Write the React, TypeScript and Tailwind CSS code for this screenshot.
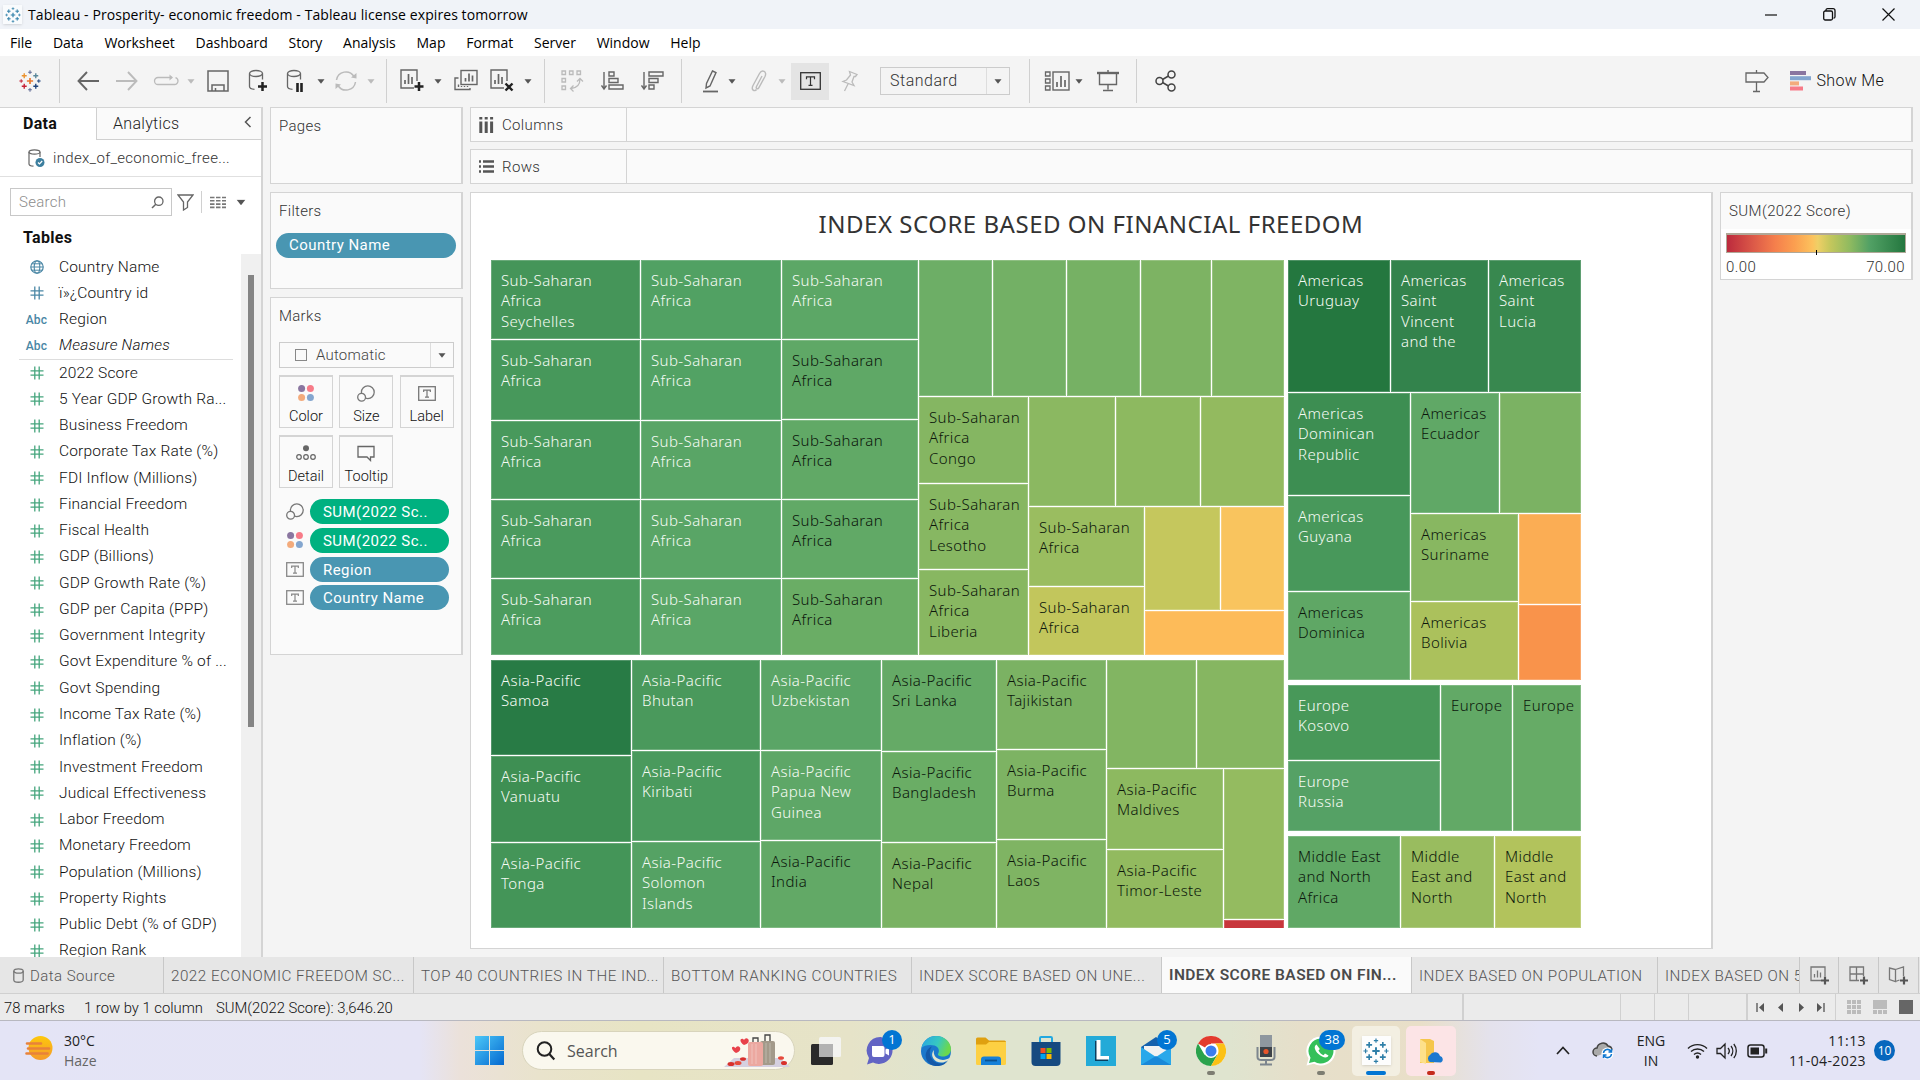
import React from "react";

/* ---------- treemap model ---------- */
type Leaf = { s: number; f: string; t?: string[]; dark?: boolean };
type Group = { s: number; dir: "row" | "col"; gap?: boolean; c: TreeNode[] };
type TreeNode = Leaf | Group;

const L = (s: number, f: string, t?: string, dark = false): Leaf => ({ s, f, t: t ? t.split("|") : undefined, dark });
const R = (s: number, ...c: TreeNode[]): Group => ({ s, dir: "row", c });
const C = (s: number, ...c: TreeNode[]): Group => ({ s, dir: "col", c });
const SSA = "Sub-Saharan|Africa";

const subSaharan = R(
  396,
  C(150, L(80, "#459559", SSA + "|Seychelles"), L(81, "#47985b", SSA), L(79, "#48995c", SSA), L(79, "#4a9a5d", SSA), L(77, "#4c9c5e", SSA)),
  C(141, L(80, "#51a163", SSA), L(81, "#52a264", SSA), L(79, "#59a566", SSA), L(79, "#59a566", SSA), L(77, "#5aa667", SSA)),
  C(137, L(80, "#5ca766", SSA), L(80, "#5fa866", SSA, true), L(80, "#61a966", SSA, true), L(79, "#61a966", SSA, true), L(77, "#6aad65", SSA, true)),
  C(
    366,
    R(137, L(74, "#6dae66"), L(74, "#73b065"), L(74, "#76b164"), L(71, "#7db363"), L(73, "#7fb463")),
    R(
      259,
      C(110, L(87, "#85b662", SSA + "|Congo", true), L(86, "#87b762", SSA + "|Lesotho", true), L(86, "#88b761", SSA + "|Liberia", true)),
      C(
        256,
        R(110, L(87, "#8bb861"), L(85, "#8db960"), L(84, "#93ba5f")),
        R(
          149,
          C(116, L(80, "#9abd60", SSA, true), L(69, "#c2c65c", SSA, true)),
          C(140, R(104, L(76, "#c5c75d"), L(64, "#f9c45e")), L(45, "#fdbb59")),
        ),
      ),
    ),
  ),
);

const AP = "Asia-Pacific|";
const asiaPacific = R(
  269,
  C(141, L(96, "#287b45", AP + "Samoa"), L(87, "#3e8f53", AP + "Vanuatu"), L(86, "#449558", AP + "Tonga")),
  C(129, L(91, "#4a995c", AP + "Bhutan"), L(91, "#4a9a5d", AP + "Kiribati"), L(87, "#55a264", AP + "Solomon|Islands")),
  C(121, L(91, "#5aa566", AP + "Uzbekistan"), L(90, "#5ea767", AP + "Papua New|Guinea"), L(88, "#62a966", AP + "India", true)),
  C(115, L(92, "#65aa66", AP + "Sri Lanka", true), L(91, "#6aad65", AP + "Bangladesh", true), L(86, "#7ab263", AP + "Nepal", true)),
  C(110, L(90, "#7bb263", AP + "Tajikistan", true), L(90, "#7db363", AP + "Burma", true), L(89, "#7fb463", AP + "Laos", true)),
  C(
    178,
    R(109, L(90, "#82b562"), L(88, "#86b661")),
    R(160, C(117, L(81, "#8db960", AP + "Maldives", true), L(79, "#92ba5f", AP + "Timor-Leste", true)), C(61, L(151, "#94bb60"), L(9, "#c8373c"))),
  ),
);

const AM = "Americas|";
const americas = C(
  421,
  R(133, L(103, "#24773f", AM + "Uruguay"), L(98, "#33834c", AM + "Saint|Vincent|and the"), L(93, "#38884f", AM + "Saint|Lucia")),
  R(
    288,
    C(123, L(103, "#3d8e52", AM + "Dominican|Republic"), L(96, "#48985b", AM + "Guyana"), L(89, "#5fa765", AM + "Dominica", true)),
    C(
      171,
      R(121, L(89, "#60a866", AM + "Ecuador", true), L(82, "#7bb263")),
      R(167, C(108, L(88, "#88b761", AM + "Suriname", true), L(79, "#abc15c", AM + "Bolivia", true)), C(63, L(91, "#fbad54"), L(76, "#f9934b"))),
    ),
  ),
);
const europe = R(147, C(153, L(76, "#489859", "Europe|Kosovo"), L(71, "#55a165", "Europe|Russia")), L(72, "#62a966", "Europe", true), L(69, "#66ab66", "Europe", true));
const middleEast = R(93, L(113, "#60a865", "Middle East|and North|Africa", true), L(94, "#99bc5f", "Middle|East and|North", true), L(87, "#b2c35c", "Middle|East and|North", true));

function Tree({ n, axis }: { n: TreeNode; axis: "row" | "col" }) {
  const size = axis === "row" ? { width: n.s } : { height: n.s };
  if ("c" in n) {
    return (
      <div className={n.dir === "row" ? "flex shrink-0" : "flex shrink-0 flex-col"} style={size}>
        {n.c.map((k, i) => (
          <Tree key={i} n={k} axis={n.dir} />
        ))}
      </div>
    );
  }
  return (
    <div className="shrink-0 overflow-hidden border-r border-b border-white" style={size}>
      <div className="h-full overflow-hidden border border-white/20 pl-[9px] pt-[9px]" style={{ backgroundColor: n.f }}>
        {n.t?.map((t, i) => (
          <div
            key={i}
            className={
              (n.dark ? "font-[350] text-[#0c160c] " : "font-[330] text-[#f6fbf4] ") +
              "whitespace-nowrap font-['Noto_Sans',sans-serif] text-[15px] leading-[20.4px] tracking-[0.4px]"
            }
          >
            {t}
          </div>
        ))}
      </div>
    </div>
  );
}

/* ---------- small icons ---------- */
type IP = { className?: string };
const Svg = ({ w, h, className, children, c = "#666" }: { w: number; h: number; className?: string; c?: string; children: React.ReactNode }) => (
  <svg width={w} height={h} viewBox={`0 0 ${w} ${h}`} className={"shrink-0 " + (className ?? "")} fill="none" stroke={c} strokeWidth={1.5}>
    {children}
  </svg>
);
const Caret = ({ className, c = "#555" }: { className?: string; c?: string }) => (
  <Svg w={8} h={5} className={className}>
    <path d="M0.5 0.3h7L4 4.7z" fill={c} stroke="none" />
  </Svg>
);
const Sep = ({ className }: IP) => <div className={"h-[44px] w-px shrink-0 bg-[#d0d0d0] " + (className ?? "")} />;

const plus = (x: number, y: number, r: number) => `M${x - r} ${y}h${2 * r}M${x} ${y - r}v${2 * r}`;

const Logo = ({ mono = false, size = 22, className }: { mono?: boolean; size?: number; className?: string }) => {
  const col = mono ? ["#2f7fa8", "#2f7fa8", "#2f7fa8", "#2f7fa8", "#2f7fa8", "#2f7fa8"] : ["#e8762c", "#59879b", "#eb912c", "#c72035", "#1f447e", "#5c6692"];
  return (
    <svg width={size} height={size} viewBox="0 0 24 24" className={"shrink-0 " + (className ?? "")} fill="none" strokeWidth={1.5}>
      <path d={plus(12, 12, 3.4)} stroke={col[0]} strokeWidth={1.8} />
      <path d={plus(18.3, 6.3, 2.7)} stroke={col[1]} />
      <path d={plus(5.7, 6.3, 2.7)} stroke={col[2]} />
      <path d={plus(5.7, 17.7, 2.7)} stroke={col[3]} />
      <path d={plus(18.3, 17.7, 2.7)} stroke={col[4]} />
      <path d={plus(12, 2.4, 2) + plus(12, 21.6, 2)} stroke={col[5]} strokeWidth={1.1} />
      <path d={plus(2.4, 12, 2)} stroke={col[3]} strokeWidth={1.1} />
      <path d={plus(21.6, 12, 2)} stroke={col[4]} strokeWidth={1.1} />
    </svg>
  );
};

const Hash = ({ c }: { c: string }) => (
  <Svg w={14} h={14} c={c}>
    <path d="M4.8 0.5v13M9.2 0.5v13" strokeWidth={1.3} />
    <path d="M0.5 4.8h13M0.5 9.2h13" strokeWidth={1.3} />
  </Svg>
);
const Globe = () => (
  <Svg w={14} h={14} c="#4a87a5">
    <circle cx={7} cy={7} r={6.2} strokeWidth={1.2} />
    <ellipse cx={7} cy={7} rx={2.8} ry={6.2} strokeWidth={1.1} />
    <path d="M0.8 7h12.4M1.8 3.8h10.4M1.8 10.2h10.4" strokeWidth={1} />
  </Svg>
);
const SizeIcon = () => (
  <Svg w={18} h={17} c="#777">
    <circle cx={10.8} cy={7.2} r={6.4} strokeWidth={1.3} />
    <circle cx={4.6} cy={12.2} r={3.9} fill="#fafafa" strokeWidth={1.3} />
  </Svg>
);
const ColorIcon = () => (
  <Svg w={16} h={16}>
    <g stroke="none">
      <circle cx={3.6} cy={3.6} r={3.5} fill="#8a76a0" />
      <circle cx={12.4} cy={3.6} r={3.5} fill="#f77b88" />
      <circle cx={3.6} cy={12.4} r={3.5} fill="#f3ab7c" />
      <circle cx={12.4} cy={12.4} r={3.5} fill="#84a6cf" />
    </g>
  </Svg>
);
const LabelIcon = ({ w = 18, h = 15, c = "#888" }: { w?: number; h?: number; c?: string }) => (
  <Svg w={w} h={h} c={c}>
    <rect x={0.7} y={0.7} width={w - 1.4} height={h - 1.4} strokeWidth={1.3} />
    <path
      d={`M${w / 2 - h / 4.5} ${h * 0.4}V${h * 0.27}H${w / 2 + h / 4.5}V${h * 0.4}M${w / 2} ${h * 0.27}V${h * 0.73}M${w / 2 - 2} ${h * 0.74}h4`}
      strokeWidth={1.2}
    />
  </Svg>
);
const Db = () => (
  <>
    <ellipse cx={9} cy={4.5} rx={6.5} ry={3} strokeWidth={1.3} />
    <path d="M2.5 4.5v13c0 1.5 2 2.6 5 2.8M15.500 4.5v6" strokeWidth={1.3} />
  </>
);
const Bars = ({ x = 1 }: { x?: number }) => (
  <g>
    <path d={`M${x + 13} 19H${x}V1h16v11`} strokeWidth={1.4} />
    <path d={`M${x + 4} 15v-4M${x + 7.500} 15V5M${x + 11} 15V8`} strokeWidth={1.7} />
  </g>
);

/* ---------- sidebar ---------- */
const measures = [
  "2022 Score", "5 Year GDP Growth Ra...", "Business Freedom", "Corporate Tax Rate (%)", "FDI Inflow (Millions)", "Financial Freedom", "Fiscal Health",
  "GDP (Billions)", "GDP Growth Rate (%)", "GDP per Capita (PPP)", "Government Integrity", "Govt Expenditure % of ...", "Govt Spending",
  "Income Tax Rate (%)", "Inflation (%)", "Investment Freedom", "Judical Effectiveness", "Labor Freedom", "Monetary Freedom",
  "Population (Millions)", "Property Rights", "Public Debt (% of GDP)", "Region Rank",
];

const Field = ({ icon, label, italic }: { icon: React.ReactNode; label: string; italic?: boolean }) => (
  <div className="flex h-[26.27px] shrink-0 items-center text-[15.5px] font-[350] tracking-[0.18px] text-[#111]">
    <div className="ml-[19px] flex w-[35px] items-center justify-center">{icon}</div>
    <div className={"ml-[5px] whitespace-nowrap " + (italic ? "italic" : "")}>{label}</div>
  </div>
);
const Abc = () => <span className="text-[12px] font-medium text-[#4a87a5]">Abc</span>;

function Sidebar() {
  return (
    <div className="flex w-[263px] shrink-0 flex-col border-r-2 border-t border-[#d4d4d4] bg-white">
      <div className="flex h-[32px] shrink-0 text-[16px]">
        <div className="w-[96px] pl-[23px] pt-[3px] font-bold leading-[26px] tracking-[0.3px] text-[#111]">Data</div>
        <div className="flex flex-1 border-b border-l border-[#d0d0d0] bg-[#fafafa] pl-[16px] pt-[3px] font-[350] leading-[26px] tracking-[0.3px] text-[#222]">
          Analytics
          <Svg w={8} h={12} className="ml-auto mr-[9px] mt-[5px]" c="#555">
            <path d="M6.500 1L1.500 6l5 5" />
          </Svg>
        </div>
      </div>
      <div className="flex h-[37px] shrink-0 items-center border-b border-[#e0e0e0] text-[15px] font-[350] text-[#333]">
        <Svg w={17} h={19} className="ml-[28px]">
          <ellipse cx={6.500} cy={3} rx={5.500} ry={2.200} strokeWidth={1.200} />
          <path d="M1 3v12c0 1 1.800 2 4.500 2.200M12 3v5" strokeWidth={1.200} />
          <circle cx={12} cy={13.500} r={4.500} fill="#3d7f9f" stroke="none" />
          <path d="M10 13.500l1.500 1.500 2.700-3" stroke="#fff" strokeWidth={1.200} />
        </Svg>
        <span className="ml-[8px] tracking-[0.32px]">index_of_economic_free...</span>
      </div>
      <div className="mt-[11px] flex h-[28px] shrink-0 items-center">
        <div className="ml-[10px] flex h-[28px] w-[162px] items-center border border-[#c8c8c8] pl-[8px] text-[15px] font-[350] tracking-[0.3px] text-[#8c8c8c]">
          Search
          <Svg w={13} h={13} className="ml-auto mr-[7px]">
            <circle cx={7.800} cy={5.200} r={4.200} strokeWidth={1.300} />
            <path d="M4.800 8.200L1 12" strokeWidth={1.500} />
          </Svg>
        </div>
        <Svg w={17} h={17} className="ml-[5px]">
          <path d="M1 1h15l-5.500 7v5.500L6.500 16V8z" strokeWidth={1.300} />
        </Svg>
        <div className="ml-[7px] h-[22px] w-px bg-[#d0d0d0]" />
        <Svg w={16} h={13} className="ml-[8px]" c="#777">
          <path d="M0 1.500h4.500M6 1.500h4.500M12 1.500h4M0 4.800h4.500M6 4.800h4.500M12 4.800h4M0 8.100h4.500M6 8.100h4.500M12 8.100h4M0 11.400h4.500M6 11.400h4.500M12 11.400h4" strokeWidth={1.600} />
        </Svg>
        <Caret className="ml-[11px] scale-125" />
      </div>
      <div className="mt-[9px] h-[25px] shrink-0 pl-[23px] text-[16px] font-bold leading-[25px] tracking-[0.3px] text-[#111]">Tables</div>
      <div className="mt-[4px] flex min-h-0 flex-1">
        <div className="flex w-[241px] flex-col overflow-hidden">
          <Field icon={<Globe />} label="Country Name" />
          <Field icon={<Hash c="#4a87a5" />} label="ï»¿Country id" />
          <Field icon={<Abc />} label="Region" />
          <Field icon={<Abc />} label="Measure Names" italic />
          <div className="ml-[19px] mr-[8px] h-px shrink-0 bg-[#ddd]" />
          {measures.map((m) => (
            <Field key={m} icon={<Hash c="#45a57d" />} label={m} />
          ))}
        </div>
        <div className="flex flex-1 justify-center bg-[#f0f0f0] pt-[21px]">
          <div className="h-[452px] w-[6px] bg-[#858585]" />
        </div>
      </div>
    </div>
  );
}

/* ---------- cards ---------- */
const Card = ({ title, className, children }: { title: string; className: string; children?: React.ReactNode }) => (
  <div className={"shrink-0 border border-r-2 border-[#d4d4d4] bg-[#fafafa] " + className}>
    <div className="h-[37px] pl-[8px] text-[15px] font-[350] leading-[36px] tracking-[0.3px] text-[#333]">{title}</div>
    {children}
  </div>
);
const MarkBtn = ({ label, children }: { label: string; children: React.ReactNode }) => (
  <div className="flex h-[53px] w-[54px] flex-col items-center justify-between border border-t-2 border-[#d4d4d4] bg-[#fafafa] pt-[7px] text-[14.5px] font-[350] text-[#111]">
    <div className="flex h-[18px] items-center">{children}</div>
    <div className="leading-[20px]">{label}</div>
  </div>
);
const Pill = ({ icon, label, green }: { icon: React.ReactNode; label: string; green?: boolean }) => (
  <div className="flex h-[25px] items-center">
    <div className="flex w-[31px] items-center justify-center">{icon}</div>
    <div
      className={
        (green ? "bg-[#00b180] " : "bg-[#4996b2] ") +
        "h-[25px] w-[139px] rounded-full pl-[13px] text-[15px] font-[450] leading-[26px] tracking-[0.45px] text-white"
      }
    >
      {label}
    </div>
  </div>
);

function Shelves() {
  return (
    <div className="flex w-[193px] shrink-0 flex-col gap-[8px]">
      <Card title="Pages" className="h-[77px]" />
      <Card title="Filters" className="h-[97px]">
        <div className="ml-[5px] mt-[3px] h-[25px] w-[180px] rounded-full bg-[#4996b2] pl-[13px] text-[15px] font-[450] leading-[25px] tracking-[0.45px] text-white">Country Name</div>
      </Card>
      <Card title="Marks" className="h-[358px]">
        <div className="ml-[8px] mt-[7px] flex h-[26px] w-[175px] items-center border border-[#ccc] text-[15px] font-[350] tracking-[0.2px] text-[#444]">
          <div className="ml-[15px] mr-[9px] h-[12px] w-[12px] border border-[#888]" />
          Automatic
          <div className="ml-auto flex h-full w-[23px] items-center justify-center border-l border-[#ddd]">
            <Caret />
          </div>
        </div>
        <div className="ml-[8px] mt-[7px] grid w-[175px] grid-cols-3 gap-x-[6px] gap-y-[7px]">
          <MarkBtn label="Color"><ColorIcon /></MarkBtn>
          <MarkBtn label="Size"><SizeIcon /></MarkBtn>
          <MarkBtn label="Label"><LabelIcon c="#777" /></MarkBtn>
          <MarkBtn label="Detail">
            <Svg w={20} h={16}>
              <circle cx={10} cy={3.200} r={3} fill="#666" stroke="none" />
              <circle cx={3} cy={12} r={2.300} strokeWidth={1.200} />
              <circle cx={10} cy={12} r={2.300} strokeWidth={1.200} />
              <circle cx={17} cy={12} r={2.300} strokeWidth={1.200} />
            </Svg>
          </MarkBtn>
          <MarkBtn label="Tooltip">
            <Svg w={18} h={17}>
              <path d="M1 1.500h16v10.500h-3.500v3.500l-3.500-3.500H1z" strokeWidth={1.300} />
            </Svg>
          </MarkBtn>
        </div>
        <div className="ml-[8px] mt-[11px] flex flex-col gap-[3.800px]">
          <Pill icon={<SizeIcon />} label="SUM(2022 Sc.." green />
          <Pill icon={<ColorIcon />} label="SUM(2022 Sc.." green />
          <Pill icon={<LabelIcon />} label="Region" />
          <Pill icon={<LabelIcon />} label="Country Name" />
        </div>
      </Card>
    </div>
  );
}

const Shelf = ({ label, icon }: { label: string; icon: React.ReactNode }) => (
  <div className="flex h-[35px] shrink-0 items-center border border-r-2 border-[#d4d4d4] bg-[#fafafa] text-[15px] font-[350] tracking-[0.35px] text-[#333]">
    <div className="flex h-full w-[156px] items-center border-r border-[#d4d4d4] pl-[8px]">
      {icon}
      <span className="ml-[8px] pt-[2px]">{label}</span>
    </div>
  </div>
);

function Main() {
  return (
    <div className="flex w-[1443px] shrink-0 flex-col">
      <Shelf
        label="Columns"
        icon={
          <Svg w={15} h={16} c="#555">
            <path d="M1.800 4.500V16M7.200 4.500V16M12.600 4.500V16M1.800 0v2.500M7.200 0v2.500M12.600 0v2.500" strokeWidth={3} />
          </Svg>
        }
      />
      <div className="h-[7px] shrink-0" />
      <Shelf
        label="Rows"
        icon={
          <Svg w={15} h={13} c="#555">
            <path d="M4 1.500h11M4 6.500h11M4 11.500h11M0 1.500h2M0 6.500h2M0 11.500h2" strokeWidth={2.600} />
          </Svg>
        }
      />
      <div className="mt-[8px] flex gap-[7px]">
        <div className="h-[757px] w-[1243px] border border-r-2 border-[#d4d4d4] bg-white">
          <div className="h-[67px] pt-[13px] text-center font-['Noto_Sans',sans-serif] text-[24px] leading-[36px] tracking-[0.52px] text-[#333]">
            INDEX SCORE BASED ON FINANCIAL FREEDOM
          </div>
          <div className="ml-[20px] flex gap-[3px]">
            <div className="flex w-[794px] flex-col gap-[4px]">
              <Tree n={subSaharan} axis="col" />
              <Tree n={asiaPacific} axis="col" />
            </div>
            <div className="flex w-[294px] flex-col gap-[4px]">
              <Tree n={americas} axis="col" />
              <Tree n={europe} axis="col" />
              <Tree n={middleEast} axis="col" />
            </div>
          </div>
        </div>
        <div className="h-[88px] w-[193px] border border-r-2 border-[#d4d4d4] bg-white text-[15px] font-[350] tracking-[0.4px] text-[#333]">
          <div className="h-[36px] bg-[#fafafa] pl-[8px] leading-[36px]">SUM(2022 Score)</div>
          <div className="relative ml-[5px] mt-[4px] h-[20px] w-[180px] border border-t-2 border-[#b0a898] bg-[linear-gradient(90deg,#bc2a3d_0%,#dc5a48_15%,#f57f4c_27%,#fb9f50_38%,#fcc25d_48%,#efcf66_51%,#c4c75c_58%,#8fba60_69%,#52a165_80%,#24773f_100%)]">
            <div className="absolute left-[89px] top-[15px] h-[5px] w-px bg-black" />
          </div>
          <div className="flex justify-between pl-[5px] pr-[6px] leading-[28px]">
            <span>0.00</span>
            <span>70.00</span>
          </div>
        </div>
      </div>
    </div>
  );
}

/* ---------- toolbar ---------- */
function Toolbar() {
  const g = "#bbb";
  return (
    <div className="flex h-[51px] shrink-0 items-center bg-[#f4f4f4] pb-[1px] pl-[19px] pr-[36px]">
      <Logo />
      <Sep className="ml-[18px]" />
      <Svg w={22} h={20} className="ml-[17px]"><path d="M22 10H1.500M10 1L1.500 10l8.500 9" strokeWidth={1.900} /></Svg>
      <Svg w={22} h={20} className="ml-[17px]" c={g}><path d="M0 10h20.500M12 1l8.500 9-8.500 9" strokeWidth={1.900} /></Svg>
      <Svg w={26} h={14} className="ml-[15px]" c={g}><path d="M19 3.500H5a3.500 3.500 0 0 0-3.500 3.500A3.500 3.500 0 0 0 5 10.500h16.500A3.500 3.500 0 0 0 25 7a3.500 3.500 0 0 0-2.500-3.300" strokeWidth={1.300} /><path d="M16.500 0.500l3.500 3-3.500 3z" fill={g} stroke="none" /></Svg>
      <Caret className="ml-[8px]" c={g} />
      <Svg w={22} h={22} className="ml-[12px]"><rect x={1} y={1} width={20} height={20} /><path d="M5 21v-6h12v6M8.500 21v-3" /></Svg>
      <Svg w={22} h={24} className="ml-[18px]"><Db /><path d={plus(15.500, 17.500, 4.500)} stroke="#222" strokeWidth={2.500} /></Svg>
      <Svg w={22} h={24} className="ml-[16px]"><Db /><path d="M12.500 14v9M16.500 14v9" stroke="#222" strokeWidth={2.600} /></Svg>
      <Caret className="ml-[10px]" />
      <Svg w={24} h={22} className="ml-[9px]" c={g}><path d="M2.500 10A9.500 9.500 0 0 1 20 6.500M21.500 12A9.500 9.500 0 0 1 4 15.500" /><path d="M17 7.500l5.500 1V3zM7 14.500l-5.500-1V19z" fill={g} stroke="none" /></Svg>
      <Caret className="ml-[9px]" c={g} />
      <Sep className="ml-[11px]" />
      <Svg w={26} h={24} className="ml-[13px]"><Bars /><path d={plus(19, 17.500, 4.500)} stroke="#222" strokeWidth={2.500} /></Svg>
      <Caret className="ml-[8px]" />
      <Svg w={26} h={24} className="ml-[11px]"><rect x={8} y={1.500} width={16} height={14} strokeWidth={1.400} /><path d="M12.500 12.500V9M16 12.500v-8M19.500 12.500v-6" strokeWidth={1.700} /><path d="M5.500 9H2v11.500h15V19" strokeWidth={1.400} /><path d="M5.500 18v-2.500M8.500 18v-1M11.500 18v-1M14.500 18v-1" strokeWidth={1.400} /></Svg>
      <Svg w={26} h={24} className="ml-[11px]"><Bars /><path d="M15.500 14.500l7 7M22.500 14.500l-7 7" stroke="#222" strokeWidth={2.400} /></Svg>
      <Caret className="ml-[8px]" />
      <Sep className="ml-[12px]" />
      <Svg w={24} h={24} className="ml-[15px]" c={g}><path d="M2 2h3.500v3.500H2zM9.500 2H13v3.500H9.500zM17 2h3.500v3.500H17zM2 9.500h3.500V13H2zM2 17h3.500v3.500H2z" strokeWidth={1.300} /><path d="M20 10c0 6-3.500 9-9 9.500M17 12.500l3-3 3 3M13.500 16.500l-3 3 3 3" strokeWidth={1.300} /></Svg>
      <Svg w={24} h={22} className="ml-[17px]"><path d="M3 2v16M0.500 15.500L3 19l2.500-3.500" strokeWidth={1.400} /><path d="M8 2h5v4H8zM8 8.500h9v4H8zM8 15h14v4H8z" strokeWidth={1.400} /></Svg>
      <Svg w={24} h={22} className="ml-[16px]"><path d="M3 2v16M0.500 15.500L3 19l2.500-3.500" strokeWidth={1.400} /><path d="M8 2h14v4H8zM8 8.500h9v4H8zM8 15h5v4H8z" strokeWidth={1.400} /></Svg>
      <Sep className="ml-[16px]" />
      <Svg w={18} h={24} className="ml-[20px]"><path d="M10.500 2l3.500 1.500L8 17l-4 2 .5-4.500z" strokeWidth={1.400} /><path d="M1 22.500h15" strokeWidth={1.800} /></Svg>
      <Caret className="ml-[8px]" />
      <Svg w={18} h={24} className="ml-[14px]" c={g}><path d="M12 7L6.500 17.500c-1 2.200 1.300 3.200 2.400 1.200L15 7.500c2.500-5-3-7.500-5.500-3L3 16.500c-2.200 4.500 1.500 6.500 3.500 4" strokeWidth={1.400} /></Svg>
      <Caret className="ml-[10px]" c={g} />
      <div className="ml-[5px] flex h-[37px] w-[38px] shrink-0 items-center justify-center bg-[#e4e4e4]"><LabelIcon w={21} h={18} c="#333" /></div>
      <Svg w={18} h={22} className="ml-[12px]" c={g}><path d="M8.500 1.500l7.500 3-1.500 2-1.500 0-2 5.500 2 3.500L2 11.500l3.500-1.500L9.500 5zM7 14L3.500 21" strokeWidth={1.300} /></Svg>
      <div className="ml-[21px] flex h-[28px] w-[130px] shrink-0 items-center border border-[#ccc] pl-[9px] text-[16px] font-[350] tracking-[0.5px] text-[#333]">
        Standard
        <div className="ml-auto flex h-full w-[23px] items-center justify-center border-l border-[#ddd]"><Caret /></div>
      </div>
      <Sep className="ml-[19px]" />
      <Svg w={26} h={22} className="ml-[14px]"><path d="M1.500 2H6v4H1.500zM1.500 9H6v4H1.500zM1.500 16H6v4H1.500z" strokeWidth={1.300} /><rect x={9} y={2} width={16} height={18} strokeWidth={1.400} /><path d="M13 17v-5M17 17V6M21 17v-7" strokeWidth={1.700} /></Svg>
      <Caret className="ml-[5px]" />
      <Svg w={24} h={22} className="ml-[13px]"><path d="M1 3h22" strokeWidth={2.400} /><path d="M12 0v3M3.500 4v10.500h17V4M12 14.500v5M7 20.500h10" strokeWidth={1.400} /></Svg>
      <Sep className="ml-[16px]" />
      <Svg w={22} h={22} className="ml-[18px]" c="#444"><circle cx={4.500} cy={11} r={3.500} /><circle cx={16.500} cy={4.500} r={3.500} /><circle cx={16.500} cy={17.500} r={3.500} /><path d="M7.500 9.500l6-3.500M7.500 12.500l6 3.500" /></Svg>
      <Svg w={25} h={24} className="ml-auto"><path d="M2 4h18l4 4.500-4 4.500H2zM12.500 1v3M12.500 13v9.500M9 22.500h7" strokeWidth={1.300} /></Svg>
      <Svg w={21} h={20} className="ml-[21px]"><g stroke="none"><rect y={0} width={16} height={4} fill="#8a76a0" /><rect y={5.200} width={21} height={4} fill="#84a6cf" /><rect y={10.400} width={9} height={4} fill="#f3ab7c" /><rect y={15.500} width={13} height={4} fill="#f77b88" /></g></Svg>
      <span className="ml-[6px] whitespace-nowrap text-[16px] font-[350] tracking-[0.3px] text-[#111]">Show Me</span>
    </div>
  );
}

/* ---------- bottom bars ---------- */
const tabs: [string, string][] = [
  ["w-[250px]", "2022 ECONOMIC FREEDOM SC..."],
  ["w-[250px]", "TOP 40 COUNTRIES IN THE IND..."],
  ["w-[248px]", "BOTTOM RANKING COUNTRIES"],
  ["w-[250px]", "INDEX SCORE BASED ON UNE..."],
  ["w-[250px]", "INDEX SCORE BASED ON FIN..."],
  ["w-[246px]", "INDEX BASED ON POPULATION"],
  ["w-[142px]", "INDEX BASED ON 5"],
];

function SheetTabs() {
  const p = <path d={plus(16, 14.500, 4)} stroke="#555" strokeWidth={2.200} />;
  return (
    <div className="flex h-[37px] shrink-0 border-b border-[#d0d0d0] bg-[#e6e6e6] text-[15px] font-[350] text-[#555]">
      <div className="flex w-[164px] shrink-0 items-center border-r border-[#c8c8c8] pl-[13px]">
        <Svg w={11} h={15} c="#777"><ellipse cx={5.500} cy={3} rx={4.700} ry={2.200} strokeWidth={1.300} /><path d="M0.800 3v9c0 3 9.400 3 9.400 0V3" strokeWidth={1.300} /></Svg>
        <span className="ml-[6px] pt-[2px] tracking-[0.450px]">Data Source</span>
      </div>
      {tabs.map(([w, t], i) => (
        <div
          key={t}
          className={w + " shrink-0 overflow-hidden whitespace-nowrap border-r border-[#c8c8c8] pl-[7px] " + (i === 4 ? "bg-[#fafafa] text-[15.5px] font-semibold leading-[36px] tracking-[0.450px] text-[#4a4a4a]" : "text-[15.200px] leading-[38px] tracking-[0.500px]")}
        >
          {t}
        </div>
      ))}
      <div className="flex w-[39px] items-center justify-center border-r border-[#c8c8c8]">
        <Svg w={21} h={19} c="#777"><path d="M12 14.500H2V1h14v9M5.500 11.500V8M8.500 11.500V4.500M11.500 11.500V6.500" strokeWidth={1.300} />{p}</Svg>
      </div>
      <div className="flex w-[40px] items-center justify-center border-r border-[#c8c8c8]">
        <Svg w={21} h={19} c="#777"><path d="M11 14.500H2V1h13.500v9M2 8h13M8.500 1v13.500" strokeWidth={1.300} />{p}</Svg>
      </div>
      <div className="flex w-[40px] items-center justify-center border-r border-[#c8c8c8]">
        <Svg w={21} h={19} c="#777"><path d="M1.500 2l6 1.500v12l-6-2zM7.500 3.500L15.500 1v9M7.500 15.500l4-1.500" strokeWidth={1.300} />{p}</Svg>
      </div>
    </div>
  );
}

function StatusBar() {
  return (
    <div className="flex h-[27px] shrink-0 items-center border-b border-[#b8b8c0] bg-[#ebebeb] pl-[4px] text-[14.800px] font-[350] text-[#111]">
      <span className="w-[80px] pt-[2px]">78 marks</span>
      <span className="w-[132px] pt-[2px]">1 row by 1 column</span>
      <span className="pt-[2px]">SUM(2022 Score): 3,646.20</span>
      <div className="ml-auto flex h-full">
        <div className="w-[158px] border-l-2 border-[#d0d0d0]" />
        <div className="w-[34px] border-l border-[#d0d0d0]" />
        <div className="w-[34px] border-l border-[#d0d0d0]" />
        <div className="w-[58px] border-l border-[#d0d0d0]" />
        <div className="flex w-[89px] items-center gap-[11px] border-l-2 border-[#d0d0d0] pl-[8px]">
          <Svg w={9} h={9}><path d="M1 0v9" /><path d="M8 0v9L3 4.500z" fill="#555" stroke="none" /></Svg>
          <Svg w={9} h={9}><path d="M7 0v9L2 4.500z" fill="#555" stroke="none" /></Svg>
          <Svg w={9} h={9}><path d="M3 0v9l5-4.500z" fill="#555" stroke="none" /></Svg>
          <Svg w={9} h={9}><path d="M8 0v9" /><path d="M1 0v9l5-4.500z" fill="#555" stroke="none" /></Svg>
        </div>
        <div className="flex w-[85px] items-center gap-[12px] border-l border-[#d0d0d0] pl-[11px]">
          <Svg w={14} h={14}><path d="M0 2h4M5 2h4M10 2h4M0 7h4M5 7h4M10 7h4M0 12h4M5 12h4M10 12h4" stroke="#bbb" strokeWidth={4} /></Svg>
          <Svg w={14} h={14}><path d="M0 4.500h14" stroke="#bbb" strokeWidth={9} /><path d="M0 12h4M5 12h4M10 12h4" stroke="#bbb" strokeWidth={4} /></Svg>
          <div className="h-[14px] w-[14px] bg-[#666]" />
        </div>
      </div>
    </div>
  );
}

const Badge = ({ n, className }: { n: string; className: string }) => (
  <div className={"absolute flex h-[20px] min-w-[20px] items-center justify-center rounded-full bg-[#0275d3] text-[13px] leading-none text-white " + className}>{n}</div>
);

function Taskbar() {
  return (
    <div className="flex h-[59px] shrink-0 items-center overflow-hidden bg-[linear-gradient(90deg,#e4e4f6_0px,#e5e4f5_420px,#ebe1da_460px,#e9e3cc_540px,#e7e4c4_640px,#e6e3c8_850px,#dfe4cf_940px,#dfe4cf_1230px,#e6dfca_1300px,#e9dfc8_1420px,#e4e2ec_1490px,#e4e4f6_1540px)] font-['Open_Sans',sans-serif] text-[14px] text-[#222]">
      <svg width={28} height={28} viewBox="0 0 28 28" className="mb-[3px] ml-[25px] shrink-0">
        <defs><linearGradient id="sun" x1="0" y1="0" x2="0" y2="1"><stop offset="0" stopColor="#fdc80c" /><stop offset="1" stopColor="#f59a2a" /></linearGradient></defs>
        <circle cx={15.500} cy={13} r={12} fill="url(#sun)" />
        <path d="M2 8.500h14M3 13.500h21M1.500 18.500h21" stroke="#e8823a" strokeWidth={2.600} strokeLinecap="round" />
      </svg>
      <div className="ml-[11px] w-[411px] leading-[20px]">
        <div>30°C</div>
        <div className="text-[#666]">Haze</div>
      </div>
      <svg width={29} height={29} viewBox="0 0 29 29" className="shrink-0">
        <defs><linearGradient id="win" x1="0" y1="0" x2="1" y2="1"><stop offset="0" stopColor="#4cc8f8" /><stop offset="1" stopColor="#0468d0" /></linearGradient></defs>
        <path d="M0 0h14v14H0zM15 0h14v14H15zM0 15h14v14H0zM15 15h14v14H15z" fill="url(#win)" />
      </svg>
      <div className="ml-[18px] flex h-[39px] w-[273px] shrink-0 items-center rounded-full border border-[#d8d4bc] bg-[#faf8ee] pl-[13px] text-[16px] text-[#555]">
        <Svg w={20} h={20} c="#222"><circle cx={8.500} cy={8} r={6.800} strokeWidth={2} /><path d="M13.300 13l5 5.500" strokeWidth={2.200} /></Svg>
        <span className="ml-[11px]">Search</span>
        <svg width={66} height={36} viewBox="0 0 66 36" className="ml-auto mr-[4px] shrink-0">
          <path d="M0 34L10 25h46l10 9z" fill="#d5d0e0" />
          <path d="M29 9V5h5v4M41 8V2h5v6" stroke="#444" fill="none" strokeWidth={1.300} />
          <rect x={36} y={8} width={15} height={24} rx={2} fill="#a39a8a" />
          <rect x={24} y={9} width={15} height={24} rx={2} fill="#eca8a0" />
          <path d="M28 11v20M32 11v20M42 10v20M46 10v20" stroke="#fff" strokeOpacity={0.300} />
          <path d="M20 12c-5-3-4-7-1-6 .5.200 1 1 1 1s2-3 4-1 0 5-4 6zM12 20c-5-3-5-7-2-6l1.500 1s2-3 4-1 0 5-3.500 6z" fill="#e8414a" />
          <ellipse cx={7} cy={31} rx={3.500} ry={2} fill="#d8302c" /><ellipse cx={14} cy={30} rx={3.500} ry={2} fill="#e64a3c" /><ellipse cx={19} cy={26} rx={3} ry={1.800} fill="#d8302c" /><ellipse cx={57} cy={25} rx={3} ry={1.800} fill="#e64a3c" /><ellipse cx={60} cy={30} rx={3} ry={2} fill="#d8302c" />
        </svg>
      </div>
      <svg width={30} height={28} viewBox="0 0 30 28" className="ml-[16px] shrink-0">
        <rect y={7} width={22} height={21} rx={1.500} fill="#2a2a2a" />
        <rect x={8} width={22} height={20} rx={1.500} fill="#f4f4f4" fillOpacity={0.900} />
        <rect x={8} y={7} width={14} height={13} fill="#b2b2b2" />
      </svg>
      <div className="relative ml-[25px] h-[30px] w-[30px] shrink-0">
        <svg width={30} height={30} viewBox="0 0 30 30"><path d="M14.500 1A13.500 13.500 0 1 1 7 26.500L1 28.500 3 22A13.500 13.500 0 0 1 14.500 1z" fill="#6264c4" /><path d="M6 10h10.500a2 2 0 0 1 2 2v7a2 2 0 0 1-2 2H8a2 2 0 0 1-2-2zM19.500 13.500l3.500-2v8l-3.500-2z" fill="#fff" /></svg>
        <Badge n="1" className="-right-[6px] -top-[6px]" />
      </div>
      <svg width={30} height={30} viewBox="0 0 30 30" className="ml-[25px] shrink-0">
        <defs>
          <linearGradient id="e1" x1="0" y1="0" x2="1" y2="0.300"><stop offset="0" stopColor="#27a4e6" /><stop offset="0.600" stopColor="#37c8c0" /><stop offset="1" stopColor="#6cd84c" /></linearGradient>
        </defs>
        <circle cx={15} cy={15} r={15} fill="#1b78cc" />
        <path d="M0.500 12C2 4.500 8 0 15 0c9 0 15 6.500 15 13 0 5-4 7.500-8 7.500-3.500 0-5.500-1.200-5-2.500 1.500-2 1.500-7-3.500-8.500C8.500 8 2.500 9.500.500 12z" fill="url(#e1)" />
        <path d="M11 10.500c-4 4.500-2.500 12.500 4 16 4.500 2 9 1 12-2-3 4.500-8 6-12.500 5.500C7 29 3.500 22 5 17c1-3.500 3.500-6 6-6.500z" fill="#1459a8" />
        <path d="M13 14c-1 4 1 8 6 9.500 3.500 1 7 0 9.500-1.500l-1 2c-3 2.500-8 3.500-12 1.500-5-3-5.500-8.500-2.500-11.500z" fill="#e4e6cf" />
      </svg>
      <svg width={30} height={28} viewBox="0 0 30 28" className="ml-[25px] shrink-0">
        <path d="M0 2a1.500 1.500 0 0 1 1.500-1.500h8L13 3.500h15.500A1.500 1.500 0 0 1 30 5v5H0z" fill="#dfa010" />
        <path d="M0 7.500h10L13 5h17v21.500a1.500 1.500 0 0 1-1.500 1.500h-27A1.500 1.500 0 0 1 0 26.500z" fill="#fdd043" />
        <path d="M5 28v-5.500a3 3 0 0 1 3-3h14a3 3 0 0 1 3 3V28z" fill="#1680d8" /><path d="M9 23.500h12" stroke="#0c5190" strokeWidth={1.800} />
      </svg>
      <svg width={30} height={30} viewBox="0 0 30 30" className="ml-[25px] shrink-0">
        <path d="M9 6V2.200C9 1.500 9.500 1 10.200 1h9.600c.7 0 1.200.500 1.200 1.200V6" stroke="#22a8e0" strokeWidth={2} fill="none" />
        <path d="M0.500 6h29v20a4 4 0 0 1-4 4h-21a4 4 0 0 1-4-4z" fill="#164a80" />
        <path d="M9.500 12h5v5h-5z" fill="#f25022" /><path d="M15.500 12h5v5h-5z" fill="#7fba00" /><path d="M9.500 18h5v5h-5z" fill="#00a4ef" /><path d="M15.500 18h5v5h-5z" fill="#ffb900" />
      </svg>
      <div className="ml-[25px] flex h-[30px] w-[30px] shrink-0 items-center justify-center bg-[#23aad8]">
        <svg width={18} height={22} viewBox="0 0 18 22"><path d="M3 1v20h13v-4H8V1z" fill="#0a3f60" /><path d="M4.500 0v19.500H17v-3.500H8.500V0z" fill="#fff" /></svg>
      </div>
      <div className="relative ml-[25px] h-[30px] w-[30px] shrink-0">
        <svg width={30} height={30} viewBox="0 0 30 30"><path d="M0 11L15 1l15 10v17.500H0z" fill="#1661ad" /><path d="M3 10h24v8l-12 6L3 18z" fill="#f2f2f2" /><path d="M0 11l15 10L30 11v18H0z" fill="#29a8ea" /><path d="M0 29l15-9 15 9z" fill="#1a88d8" /></svg>
        <Badge n="5" className="-right-[6px] -top-[6px]" />
      </div>
      <div className="relative ml-[25px] h-[30px] w-[30px] shrink-0">
        <svg width={30} height={30} viewBox="0 0 30 30">
          <circle cx={15} cy={15} r={15} fill="#fff" />
          <path d="M15 15L2 7.500A15 15 0 0 1 28 7.500H15z" fill="#e33b2e" />
          <path d="M2 7.500A15 15 0 0 0 15 30l6.500-11.200L15 15 8.500 18.700z" fill="#2aa24c" />
          <path d="M28 7.500A15 15 0 0 1 15 30l6.500-11.200c2-3.500 1-8-2.500-11.300z" fill="#fbc116" />
          <circle cx={15} cy={15} r={7} fill="#fff" /><circle cx={15} cy={15} r={5.500} fill="#3b7ded" />
        </svg>
        <div className="absolute left-[11px] top-[35px] h-[4px] w-[8px] rounded-full bg-[#7d7d72]" />
      </div>
      <svg width={20} height={31} viewBox="0 0 20 31" className="ml-[30px] shrink-0">
        <rect x={4} width={12} height={13} fill="#8e979f" /><rect x={4} y={12} width={12} height={10} fill="#3d4248" /><circle cx={10} cy={16.500} r={2.600} fill="#e8552a" /><path d="M1.500 12v10c0 2 1.500 3 4 3h9c2.500 0 4-1 4-3V12M10 25v4M4 29.500h12" fill="none" stroke="#7d868e" strokeWidth={2} />
      </svg>
      <div className="relative ml-[30px] h-[30px] w-[30px] shrink-0">
        <svg width={30} height={30} viewBox="0 0 30 30"><path d="M15 0.500A14.500 14.500 0 1 1 8 27.700L0.500 29.500l2-7A14.500 14.500 0 0 1 15 .5z" fill="#fff" /><path d="M15 2.500a12.500 12.500 0 1 1-6.500 23.200L3 27l1.500-5.300A12.500 12.500 0 0 1 15 2.500z" fill="#34c05a" /><path d="M10.500 8.500c-3 1.500-2 6 2 9.500s8.500 5 10 1.500l-3.500-2-1.500 1.700c-2-.7-4-2.500-5-4.700l1.300-1.500z" fill="#fff" /></svg>
        <Badge n="38" className="-right-[9px] -top-[6px] w-[26px]" />
        <div className="absolute left-[11px] top-[35px] h-[4px] w-[8px] rounded-full bg-[#7d7d72]" />
      </div>
      <div className="relative ml-[16px] flex h-[50px] w-[48px] shrink-0 items-center justify-center rounded-[5px] bg-[#f3efe2]">
        <div className="flex h-[29px] w-[29px] items-center justify-center bg-[#fdfdfd] shadow"><Logo mono size={26} /></div>
        <div className="absolute bottom-[1px] left-[14px] h-[4px] w-[20px] rounded-full bg-[#0275d3]" />
      </div>
      <div className="relative ml-[6px] flex h-[50px] w-[50px] shrink-0 items-center justify-center rounded-[5px] bg-[#fce4e6]">
        <svg width={26} height={28} viewBox="0 0 26 28"><path d="M2 2h10l4 2v22H2z" fill="#f5c64c" /><path d="M2 2l6 4v21l-6-2z" fill="#fde08a" /><path d="M12 25a4 4 0 0 1 0-7 5.500 5.500 0 0 1 10 1 3.500 3.500 0 0 1 1 6.500z" fill="#1a78cf" /></svg>
        <div className="absolute bottom-[1px] left-[21px] h-[4px] w-[8px] rounded-full bg-[#c42b1c]" />
      </div>
      <Svg w={14} h={9} className="ml-[100px]" c="#222"><path d="M1 8l6-6.500L13 8" strokeWidth={1.700} /></Svg>
      <Svg w={23} h={19} className="ml-[22px]" c="#444"><path d="M5 15a4 4 0 0 1 0-8 6 6 0 0 1 11-2 4.500 4.500 0 0 1 4 4.500" fill="#aaa" /><circle cx={15.500} cy={12.500} r={6} fill="#fff" stroke="none" /><path d="M11.500 12a4 4 0 0 1 7.500-1.500M19.500 13a4 4 0 0 1-7.500 1.500M19.500 8v3h-3M11.500 17v-3h3" stroke="#0f77d0" /></Svg>
      <div className="ml-[20px] w-[32px] text-center leading-[20px]"><div>ENG</div><div>IN</div></div>
      <Svg w={21} h={17} className="ml-[20px]" c="#222"><path d="M1 6.500a13.500 13.500 0 0 1 19 0M4 9.500a9.500 9.500 0 0 1 13 0M7 12.500a5.300 5.300 0 0 1 7 0" strokeWidth={1.400} /><circle cx={10.500} cy={15} r={1.700} fill="#222" stroke="none" /></Svg>
      <Svg w={22} h={18} className="ml-[8px]" c="#222"><path d="M1 6.500h3.500L9 2v14l-4.500-4.500H1zM12 6a4.500 4.500 0 0 1 0 6M15 4a8 8 0 0 1 0 10M17.800 2a11 11 0 0 1 0 14" strokeWidth={1.300} /></Svg>
      <Svg w={21} h={14} className="ml-[9px]" c="#222"><rect x={1} y={1} width={16} height={12} rx={2.500} strokeWidth={1.500} /><rect x={3.500} y={3.500} width={8.500} height={7} fill="#222" stroke="none" /><path d="M19.200 4.500v5" strokeWidth={2} /></Svg>
      <div className="ml-auto whitespace-nowrap text-right leading-[20px] tracking-[0.400px]"><div>11:13</div><div>11-04-2023</div></div>
      <div className="ml-[8px] mr-[25px] flex h-[21px] w-[21px] shrink-0 items-center justify-center rounded-full bg-[#0667bd] text-[12px] text-white">10</div>
    </div>
  );
}

export default function App() {
  return (
    <div className="flex h-[1080px] w-[1920px] flex-col overflow-hidden bg-[#f4f4f4] font-[Roboto,sans-serif]">
      <div className="flex h-[29px] shrink-0 items-center bg-[#f0f3f8] font-['Open_Sans',sans-serif] text-[14px] text-black">
        <div className="ml-[3px] flex h-[19px] w-[19px] items-center justify-center bg-[#f9fbfd] shadow"><Logo mono size={16} /></div>
        <span className="ml-[6px] whitespace-nowrap tracking-[0.080px]">Tableau - Prosperity- economic freedom - Tableau license expires tomorrow</span>
        <Svg w={12} h={12} className="ml-auto mr-[46px]" c="#111"><path d="M0 6h12" strokeWidth={1.200} /></Svg>
        <Svg w={13} h={13} className="mr-[46px]" c="#111"><rect x={0.700} y={3} width={8.800} height={9} rx={1.500} strokeWidth={1.300} /><path d="M3 3V2.200C3 1.300 3.800.700 4.600.700h5.400a2 2 0 0 1 2 2v6c0 .8-.6 1.500-1.500 1.500" strokeWidth={1.300} /></Svg>
        <Svg w={13} h={13} className="mr-[25px]" c="#111"><path d="M0.500 0.500l12 12M12.500 0.500l-12 12" strokeWidth={1.200} /></Svg>
      </div>
      <div className="flex h-[27px] shrink-0 items-center gap-[20.75px] bg-white pl-[10px] font-['Open_Sans',sans-serif] text-[14px] text-black">
        {["File", "Data", "Worksheet", "Dashboard", "Story", "Analysis", "Map", "Format", "Server", "Window", "Help"].map((m) => (
          <span key={m}>{m}</span>
        ))}
      </div>
      <Toolbar />
      <div className="flex h-[850px] shrink-0">
        <Sidebar />
        <div className="ml-[7px] flex gap-[7px]">
          <Shelves />
          <Main />
        </div>
      </div>
      <SheetTabs />
      <StatusBar />
      <Taskbar />
    </div>
  );
}
